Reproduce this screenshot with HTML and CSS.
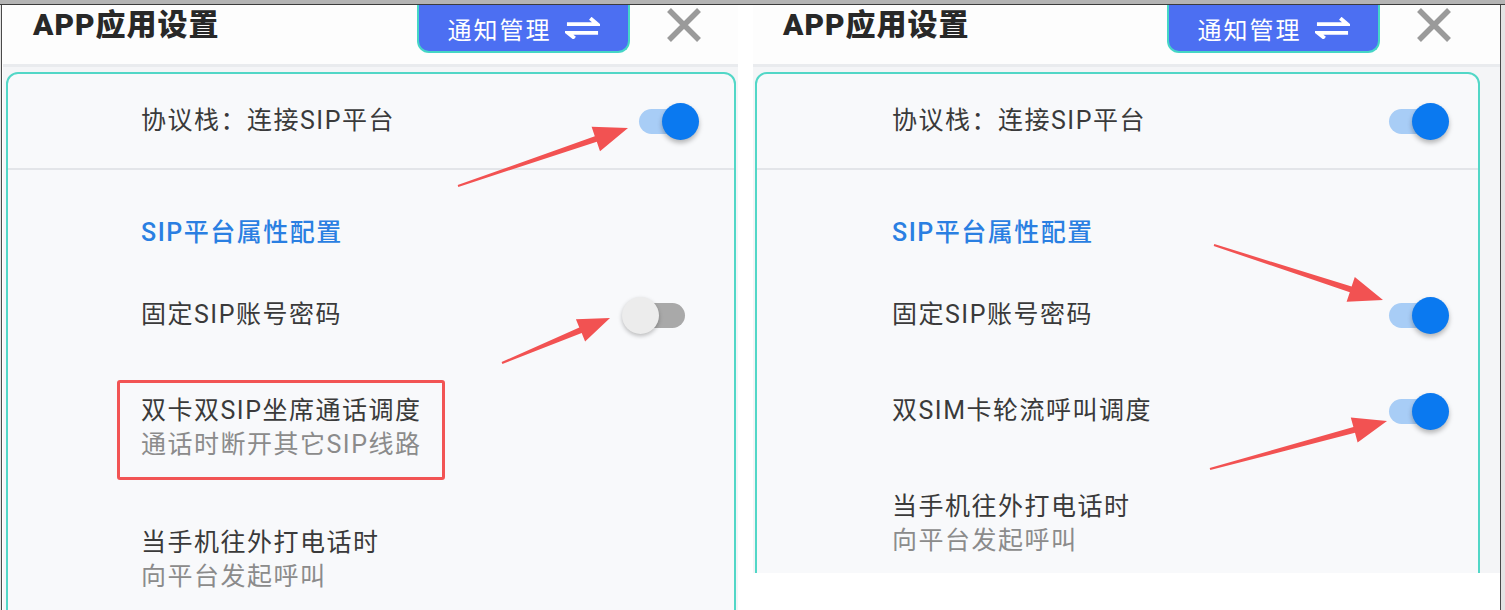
FILE: index.html
```html
<!DOCTYPE html>
<html lang="zh-CN">
<head>
<meta charset="UTF-8">
<title>APP应用设置</title>
<link rel="stylesheet" href="styles.css">
</head>
<body>
<div class="topbar"></div>
<div class="frame">

  <!-- Before: left phone -->
  <section class="phone phone-left">
    <header class="app-header">
      <h1 class="app-title">APP应用设置</h1>
      <button class="notice-btn">通知管理
        <svg class="swap" viewBox="0 0 36 22"><path d="M2 7H33L26 1M34 16H3L10 21.5"/></svg>
      </button>
      <svg class="close" viewBox="0 0 38 36"><path d="M4 3L34 33M34 3L4 33"/></svg>
    </header>
    <div class="phone-body">
      <div class="card">
        <div class="row row-top">
          <span class="label">协议栈：连接SIP平台</span>
          <span class="switch on"><span class="track"></span><span class="knob"></span></span>
        </div>
        <div class="section-title">SIP平台属性配置</div>
        <div class="row">
          <span class="label">固定SIP账号密码</span>
          <span class="switch off"><span class="track"></span><span class="knob"></span></span>
        </div>
        <div class="row row-double row-marked">
          <div class="marked">
            <div class="label">双卡双SIP坐席通话调度</div>
            <div class="sub">通话时断开其它SIP线路</div>
          </div>
        </div>
        <div class="row row-double row-last">
          <div>
            <div class="label">当手机往外打电话时</div>
            <div class="sub">向平台发起呼叫</div>
          </div>
        </div>
      </div>
    </div>
  </section>

  <!-- After: right phone -->
  <section class="phone phone-right">
    <header class="app-header">
      <h1 class="app-title">APP应用设置</h1>
      <button class="notice-btn">通知管理
        <svg class="swap" viewBox="0 0 36 22"><path d="M2 7H33L26 1M34 16H3L10 21.5"/></svg>
      </button>
      <svg class="close" viewBox="0 0 38 36"><path d="M4 3L34 33M34 3L4 33"/></svg>
    </header>
    <div class="phone-body">
      <div class="card">
        <div class="row row-top">
          <span class="label">协议栈：连接SIP平台</span>
          <span class="switch on"><span class="track"></span><span class="knob"></span></span>
        </div>
        <div class="section-title">SIP平台属性配置</div>
        <div class="row">
          <span class="label">固定SIP账号密码</span>
          <span class="switch on"><span class="track"></span><span class="knob"></span></span>
        </div>
        <div class="row">
          <span class="label">双SIM卡轮流呼叫调度</span>
          <span class="switch on"><span class="track"></span><span class="knob"></span></span>
        </div>
        <div class="row row-double row-last">
          <div>
            <div class="label">当手机往外打电话时</div>
            <div class="sub">向平台发起呼叫</div>
          </div>
        </div>
      </div>
    </div>
  </section>
</div>

<!-- annotation arrows drawn over the screenshots -->
<svg class="arrows" viewBox="0 0 1505 610">
  <polygon points="458.3,186.9 596.8,141.8 600.0,151.3 628,128 591.6,126.7 594.8,136.2 457.7,185.1"/>
  <polygon points="502.4,363.9 581.7,333.1 585.1,341.4 610,318 575.9,319.2 579.3,327.5 501.6,362.1"/>
  <polygon points="1214.3,244.0 1351.6,286.6 1354.8,277.0 1383,300 1346.6,301.8 1349.8,292.2 1213.7,246.0"/>
  <polygon points="1210.3,470.0 1355.0,432.8 1357.6,442.4 1387,421 1350.8,417.4 1353.4,427.0 1209.7,468.0"/>
</svg>
</body>
</html>
```

FILE: styles.css
```css
body {
  margin: 0;
  position: relative;
  background: #e4e4e4;
  font-family: Roboto, "Noto Sans CJK SC", sans-serif;
  color: #3a3a3a;
}
.topbar {
  height: 4px;
  background: #b4b4b4;
  border-bottom: 1px solid #3c3c3c;
}
.frame {
  display: flex;
  align-items: flex-start;
  width: 1498px;
  height: 605px;
  margin-left: 1px;
  border-left: 1px solid #4a4a4a;
  border-right: 1px solid #4a4a4a;
  background: #fff;
  overflow: hidden;
}
.phone {
  overflow: hidden;
  background: #f4f5f7;
}
.phone-left {
  width: 735px;
  height: 605px;
  margin-left: 1px;
}
.phone-right {
  width: 747px;
  height: 568px;
  margin-left: 15px;
}

/* header */
.app-header {
  display: flex;
  align-items: flex-start;
  height: 59px;
  padding-left: 30px;
  background: #fdfdfd;
  border-bottom: 3px solid #e9ebee;
}
.app-title {
  flex: 0 0 384px;
  margin: 0;
  font-size: 30px;
  font-weight: 900;
  line-height: 39px;
  letter-spacing: 1px;
  color: #282828;
}
.notice-btn {
  display: flex;
  align-items: center;
  justify-content: center;
  gap: 13px;
  width: 213px;
  height: 48px;
  padding: 0;
  border: 2px solid #45d6c6;
  border-top: none;
  border-radius: 0 0 12px 12px;
  background: #4c6ff2;
  color: #fff;
  font-family: Roboto, "Noto Sans CJK SC", sans-serif;
  font-size: 24px;
  letter-spacing: 2px;
}
.swap {
  width: 35px;
  height: 22px;
  fill: none;
  stroke: #fff;
  stroke-width: 4;
}
.close {
  width: 38px;
  height: 36px;
  margin: 2px 0 0 35px;
  fill: none;
  stroke: #9a9a9a;
  stroke-width: 5.5;
}

/* content card */
.phone-body {
  padding: 5px 2px 0 3px;
}
.phone-right .phone-body {
  padding: 5px 20px 0 2px;
}
.card {
  min-height: 620px;
  background: #f8f9fb;
  border: 2px solid #52d7c7;
  border-radius: 12px;
}
.row {
  display: flex;
  align-items: center;
  justify-content: space-between;
  box-sizing: border-box;
  height: 96px;
  padding: 0 35px 0 133px;
}
.phone-right .row {
  padding: 0 29px 0 135px;
}
.row-top {
  height: 96px;
  border-bottom: 2px solid #e3e5e9;
}
.label, .sub, .section-title {
  font-size: 25px;
  line-height: 34px;
  letter-spacing: 1.5px;
}
.sub {
  color: #8b8b8b;
}
.section-title {
  padding: 46px 0 17px 133px;
  color: #2a7fe2;
  font-weight: 500;
}
.phone-right .section-title {
  padding-left: 135px;
}
.row-double {
  align-items: flex-start;
  height: 130px;
}
.row-marked {
  padding: 17px 0 0 109px;
}
.marked {
  padding: 11px 21px 15px 21px;
  border: 3px solid #f25454;
  border-radius: 3px;
}
.row-last {
  padding-top: 33px;
}
.phone-right .row-last {
  padding-top: 31px;
}

/* toggle */
.switch {
  position: relative;
  flex: 0 0 60px;
  height: 37px;
}
.track {
  position: absolute;
  left: 0;
  top: 6px;
  width: 50px;
  height: 25px;
  border-radius: 13px;
  background: #a8cdf6;
}
.knob {
  position: absolute;
  top: 0;
  left: 23px;
  width: 37px;
  height: 37px;
  border-radius: 50%;
  background: #0a79f0;
  box-shadow: 0 3px 5px rgba(0,0,0,.28);
}
.switch.off .track {
  width: 46px;
  background: #a9a9a9;
}
.switch.off .knob {
  left: -17px;
  background: #ececec;
  box-shadow: 0 2px 4px rgba(0,0,0,.25);
}

.arrows {
  position: absolute;
  top: 0;
  left: 0;
  width: 1505px;
  height: 610px;
  fill: #f25252;
  pointer-events: none;
}
```
